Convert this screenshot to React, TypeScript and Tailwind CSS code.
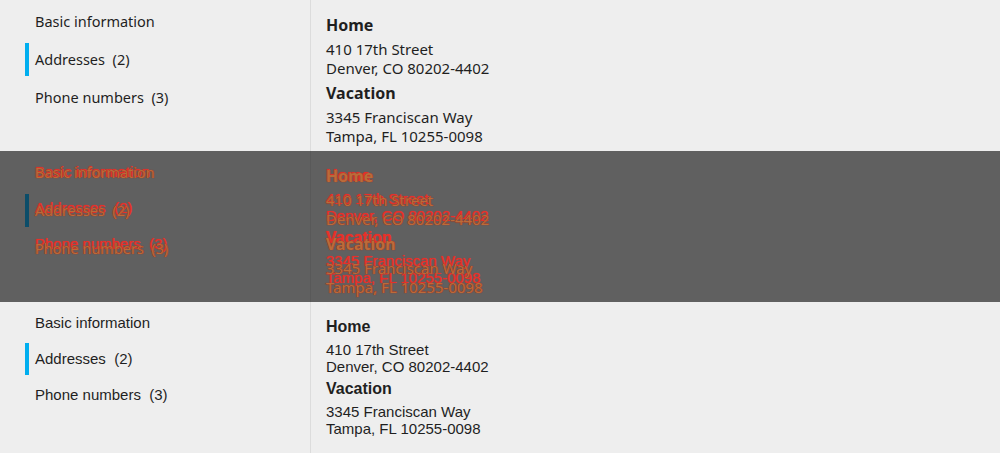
import React from "react";

type Variant = "a" | "b";

const cfg = {
  a: {
    font: "font-['Noto_Sans',sans-serif]",
    nav: "text-[14.5px] leading-[20px]",
    navPad: "pt-[2px]",
    item: "h-[38px]",
    bar: "h-[33px]",
    head: "text-[16px] leading-[20px] font-bold",
    body: "text-[15px] leading-[19px]",
    gap1: "mt-[5px]",
    gap2: "mt-[5px]",
  },
  b: {
    font: "font-['Liberation_Sans',Arial,sans-serif]",
    nav: "text-[15px] leading-[20px]",
    navPad: "pt-[3px]",
    item: "h-[36px]",
    bar: "h-[32px]",
    head: "text-[16px] leading-[20px] font-bold",
    body: "text-[15px] leading-[17px]",
    gap1: "mt-[4px]",
    gap2: "mt-[4px]",
  },
};

type Tone = "normal" | "red" | "brown" | "dim";

function Panel({ v, tone }: { v: Variant; tone: Tone }) {
  const c = cfg[v];
  const text =
    tone === "normal"
      ? "text-[#1f1f1f]"
      : tone === "red"
      ? "text-[#e8302a] [text-shadow:0_0_1px_#e8302a]"
      : tone === "brown"
      ? "text-[#b07a3e] [text-shadow:0_0_1px_#6e4a22]"
      : "text-[#0d0d0d]";
  const barColor =
    tone === "normal"
      ? "bg-[#00aeef]"
      : tone === "dim"
      ? "bg-[#0c4d69]"
      : "bg-transparent";
  const bg =
    tone === "normal" ? "bg-[#eeeeee]" : tone === "dim" ? "bg-[#606060]" : "bg-transparent";
  const border =
    tone === "normal"
      ? "border-[#dcdcdc]"
      : tone === "dim"
      ? "border-[#595959]"
      : "border-transparent";

  const items = [
    { label: "Basic information", count: "" },
    { label: "Addresses", count: "(2)", active: true },
    { label: "Phone numbers", count: "(3)" },
  ];

  return (
    <div className={`flex h-[151px] w-full ${bg} ${c.font} ${text}`}>
      <div className={`w-[311px] shrink-0 border-r ${border} ${c.navPad}`}>
        {items.map((it) => (
          <div key={it.label} className={`flex items-center pl-[25px] ${c.item}`}>
            <div className={`w-[4px] ${c.bar} ${it.active ? barColor : "bg-transparent"}`} />
            <span className={`ml-[6px] whitespace-pre ${c.nav}`}>
              {it.label}
              {it.count ? `  ${it.count}` : ""}
            </span>
          </div>
        ))}
      </div>
      <div className="flex flex-col pl-[15px] pt-[15px]">
        <div className={c.head}>Home</div>
        <div className={`${c.gap1} ${c.body}`}>
          <div>410 17th Street</div>
          <div>Denver, CO 80202-4402</div>
        </div>
        <div className={`${c.gap2} ${c.head}`}>Vacation</div>
        <div className={`${c.gap1} ${c.body}`}>
          <div>3345 Franciscan Way</div>
          <div>Tampa, FL 10255-0098</div>
        </div>
      </div>
    </div>
  );
}

export default function App() {
  return (
    <div className="flex h-[453px] w-[1000px] flex-col overflow-hidden">
      <Panel v="a" tone="normal" />
      <div className="relative h-[151px]">
        <Panel v="a" tone="dim" />
        <div className="absolute inset-0">
          <Panel v="a" tone="red" />
        </div>
        <div className="absolute inset-0">
          <Panel v="b" tone="red" />
        </div>
        <div className="absolute inset-0 opacity-80">
          <Panel v="a" tone="brown" />
        </div>
      </div>
      <Panel v="b" tone="normal" />
    </div>
  );
}
